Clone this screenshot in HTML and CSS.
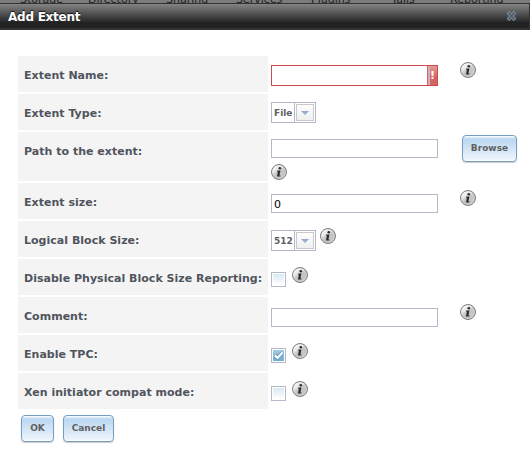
FILE: index.html
```
<!DOCTYPE html>
<html lang="en">
<head>
<meta charset="utf-8">
<title>Add Extent</title>
<link rel="stylesheet" href="styles.css">
</head>
<body>
<svg class="defs" width="0" height="0">
  <defs>
    <linearGradient id="metal" x1="0" y1="0" x2="1" y2="1">
      <stop offset="0" stop-color="#fff"/><stop offset=".45" stop-color="#e2e2e2"/>
      <stop offset=".5" stop-color="#c8c8c8"/><stop offset="1" stop-color="#ddd"/>
    </linearGradient>
    <symbol id="info" viewBox="0 0 16 16">
      <circle cx="8" cy="8" r="7.5" fill="url(#metal)" stroke="#7c7c7c" stroke-width="1"/>
      <path d="M1.5 10.5Q5 6 14 6.5Q15 13 8 14.5Q3.500 14.500 1.500 10.500Z" fill="#bbb" opacity=".5"/>
      <ellipse cx="8.800" cy="4.200" rx="1.300" ry="1.200" fill="#2b2b2b"/>
      <path d="M6 6.400H9.400L8.400 11.400H9.600L9.400 12.500H6L6.900 7.400H5.800Z" fill="#2b2b2b"/>
    </symbol>
  </defs>
</svg>
<nav class="nav"><span>Storage</span><span>Directory</span><span>Sharing</span><span>Services</span><span>Plugins</span><span>Jails</span><span>Reporting</span></nav>
<header class="bar"><h1>Add Extent</h1>
  <svg class="close" width="11" height="10" viewBox="0 0 11 10"><path d="M2 1L9 9M9 1L2 9" stroke="#8d949b" stroke-width="3.600"/><path d="M2.500 1.500L8.500 8.500M8.500 1.500L2.500 8.500" stroke="#526171" stroke-width="2"/></svg>
</header>
<main class="form">
  <div class="row"><label>Extent Name:</label><div class="field"><div class="input invalid"><b>!</b></div><svg class="info far first"><use href="#info"/></svg></div></div>
  <div class="row"><label>Extent Type:</label><div class="field"><div class="select"><span>File</span><i></i></div></div></div>
  <div class="row tall"><label>Path to the extent:</label><div class="field path"><div class="stack"><div class="input"></div><svg class="info"><use href="#info"/></svg></div><button class="browse">Browse</button></div></div>
  <div class="row"><label>Extent size:</label><div class="field"><div class="input">0</div><svg class="info far"><use href="#info"/></svg></div></div>
  <div class="row"><label>Logical Block Size:</label><div class="field"><div class="select lower"><span>512</span><i></i></div><svg class="info near"><use href="#info"/></svg></div></div>
  <div class="row"><label>Disable Physical Block Size Reporting:</label><div class="field"><div class="check"><i></i></div><svg class="info beside"><use href="#info"/></svg></div></div>
  <div class="row"><label>Comment:</label><div class="field"><div class="input"></div><svg class="info far"><use href="#info"/></svg></div></div>
  <div class="row"><label>Enable TPC:</label><div class="field"><div class="check on"><i><svg width="11" height="11" viewBox="0 0 11 11"><path d="M2 5.500L4.500 8L9.500 2.500" fill="none" stroke="#5d97bd" stroke-width="4"/><path d="M2 5.500L4.500 8L9.500 2.500" fill="none" stroke="#fff" stroke-width="2.200"/></svg></i></div><svg class="info beside"><use href="#info"/></svg></div></div>
  <div class="row"><label>Xen initiator compat mode:</label><div class="field"><div class="check"><i></i></div><svg class="info beside"><use href="#info"/></svg></div></div>
  <div class="actions"><button class="ok">OK</button><button class="cancel">Cancel</button></div>
</main>
</body>
</html>
```
FILE: styles.css
```
* { box-sizing: border-box; }
body { margin: 0; width: 530px; height: 455px; overflow: hidden; background: #fff; font-family: "DejaVu Sans", sans-serif; }
.defs { display: block; }
.nav { display: grid; grid-template-columns: 68px 78px 70px 75px 82px 57px 1fr; height: 3px; padding-left: 20px; overflow: hidden; background: #7c7c7c; color: #222; font-size: 11px; line-height: 12px; }
.nav span { margin-top: -6px; }
.bar { display: flex; align-items: flex-start; justify-content: space-between; height: 27px; padding: 7px 12px 0 8px; border: solid #333; border-width: 1px 1px 2px 0; background: linear-gradient(#848484, #292929 73%, #222 74%, #222); }
h1 { margin: -1px 0 0; color: #fff; font-size: 12px; line-height: 15px; letter-spacing: -.25px; text-shadow: 0 -1px 1px #111; }
.form { padding: 26px 0 0 18px; }
.row { display: grid; grid-template-columns: 250px 1fr; column-gap: 3px; height: 36px; margin-bottom: 2px; }
.tall { height: 49px; }
label { padding: 13px 0 0 6px; background: #f4f4f4; color: #4f545d; font-size: 11px; font-weight: bold; line-height: 14px; letter-spacing: .02px; white-space: nowrap; }
.field { display: flex; align-items: flex-start; }
.input { width: 167px; height: 19px; margin-top: 11px; padding-left: 2px; border: 1px solid #b5b8c8; background: #fff; color: #000; font-size: 11px; line-height: 19px; }
.invalid { display: flex; justify-content: flex-end; height: 21px; margin-top: 9px; border-color: #d04a4d; }
.invalid b { width: 10px; border-left: 1px solid #d46464; background: linear-gradient(#e39a9a, #d46464 60%); box-shadow: inset 2px 0 #c9b3b3; color: #fff; font-size: 11px; line-height: 19px; text-align: center; }
.info { display: block; flex: none; width: 16px; height: 16px; }
.far { margin: 7px 0 0 22px; }
.first { margin-top: 6px; }
.near { margin: 7px 0 0 4px; }
.beside { margin: 8px 0 0 6px; }
.select { display: flex; width: 45px; height: 21px; margin-top: 8px; border: 1px solid #b5b8c8; }
.lower { margin-top: 9px; }
.select span { width: 22px; padding-left: 2px; color: #606060; font-size: 9px; font-weight: bold; line-height: 20px; }
.select i { display: grid; place-items: center; width: 21px; border-left: 1px solid #b5b8c8; background: linear-gradient(#fff, #eee); box-shadow: inset 0 0 0 1px #fff, inset 0 0 0 2px #c8c8c8; }
.select i::after { content: ""; border: solid transparent; border-width: 4px 4px 0; border-top-color: #94abd0; }
.path .input { margin-top: 7px; }
.stack .info { margin-top: 6px; }
button { height: 27px; padding: 0 0 2px; border: 1px solid #769dc0; border-radius: 4px; background: linear-gradient(#fff 0, #bad7f2 3px, #e9f2fc 90%, #fff); box-shadow: 0 1px 1px #ccc; color: #606060; font: bold 9px "DejaVu Sans", sans-serif; }
.browse { width: 55px; margin: 3px 0 0 24px; }
.check { width: 15px; height: 15px; margin-top: 13px; padding: 1px; border: 1px solid #b5b8c8; }
.check i { display: block; width: 11px; height: 11px; background: linear-gradient(#d9e9f4, #fff); }
.check svg { display: block; }
.check.on i { background: linear-gradient(#a3cbe4, #72add2); }
.actions { display: flex; gap: 9px; padding: 4px 0 0 3px; }
.ok { width: 33px; }
.cancel { width: 51px; }
```
